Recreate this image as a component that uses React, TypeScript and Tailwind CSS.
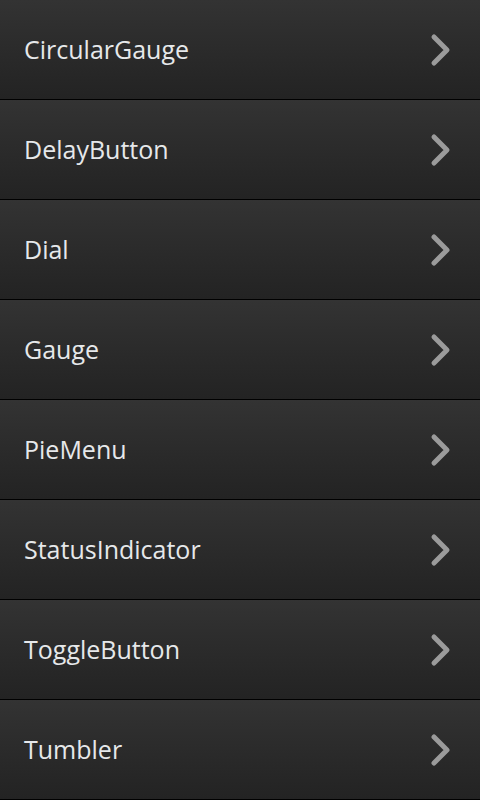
const items = [
  "CircularGauge",
  "DelayButton",
  "Dial",
  "Gauge",
  "PieMenu",
  "StatusIndicator",
  "ToggleButton",
  "Tumbler",
];

const Chevron = () => (
  <svg width="22" height="34" viewBox="0 0 22 34" fill="none">
    <path
      d="M4 4 L17 17 L4 30"
      stroke="#9b9b9b"
      strokeWidth="5"
      strokeLinecap="round"
      strokeLinejoin="round"
    />
  </svg>
);

export default function App() {
  return (
    <div className="w-[480px] h-[800px] bg-[#1c1c1c] overflow-hidden font-['Open_Sans',sans-serif]">
      {items.map((name) => (
        <div
          key={name}
          className="h-[100px] flex items-center justify-between pl-[24px] pr-[28px] bg-gradient-to-b from-[#333333] to-[#232323] border-b border-black"
        >
          <span className="text-[25px] text-[#e6e8ea]">{name}</span>
          <Chevron />
        </div>
      ))}
    </div>
  );
}
